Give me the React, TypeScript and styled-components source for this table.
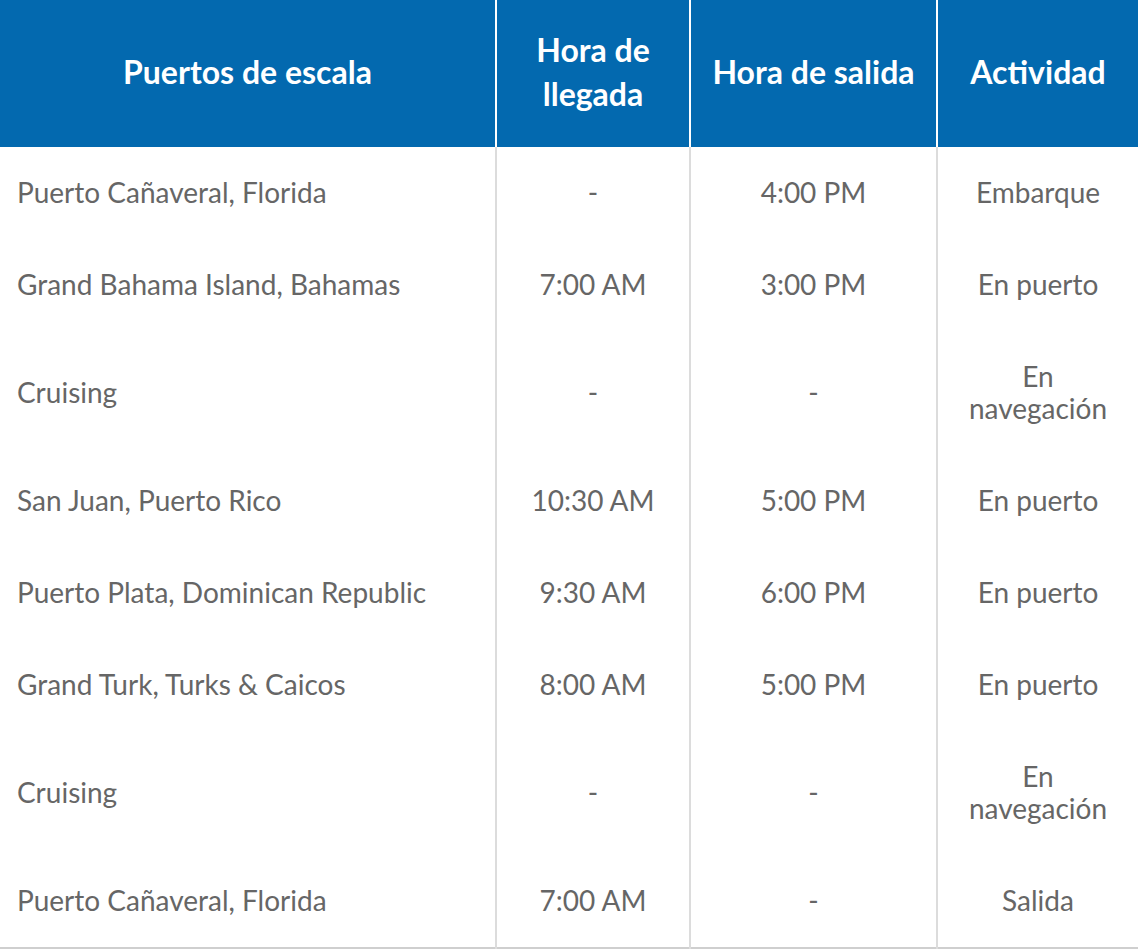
import React from 'react';
import styled, { createGlobalStyle } from 'styled-components';

const GlobalStyle = createGlobalStyle`
  html, body {
    margin: 0;
    padding: 0;
    background: #fff;
  }
  body {
    font-family: Lato, "Open Sans", "Liberation Sans", sans-serif;
  }
`;

// Styled components for the itinerary table
const Table = styled.table`
  width: 1138px;
  border-collapse: collapse;
  table-layout: fixed;
  border-bottom: 2px solid #cfcfcf;
`;

const Col = styled.col<{ $width: number }>`
  width: ${(p) => p.$width}px;
`;

const HeadCell = styled.th`
  box-sizing: border-box;
  background: #0369af;
  color: #fff;
  font-size: 32px;
  font-weight: 700;
  line-height: 44px;
  text-align: center;
  padding: 28px 10px 31px;
  border-left: 2px solid #fff;
  &:first-child {
    border-left: none;
  }
`;

const Cell = styled.td<{ $align?: 'left' | 'center' }>`
  box-sizing: border-box;
  color: #666;
  font-size: 28px;
  line-height: 32px;
  text-align: ${(p) => p.$align || 'center'};
  padding: 29px 17px 31px;
  border-left: 2px solid #dcdcdc;
  &:first-child {
    border-left: none;
  }
`;

type Stop = {
  port: string;
  arrival: string;
  departure: string;
  activity: React.ReactNode;
};

const atSea = (
  <>
    En
    <br />
    navegación
  </>
);

const stops: Stop[] = [
  { port: 'Puerto Cañaveral, Florida', arrival: '-', departure: '4:00 PM', activity: 'Embarque' },
  { port: 'Grand Bahama Island, Bahamas', arrival: '7:00 AM', departure: '3:00 PM', activity: 'En puerto' },
  { port: 'Cruising', arrival: '-', departure: '-', activity: atSea },
  { port: 'San Juan, Puerto Rico', arrival: '10:30 AM', departure: '5:00 PM', activity: 'En puerto' },
  { port: 'Puerto Plata, Dominican Republic', arrival: '9:30 AM', departure: '6:00 PM', activity: 'En puerto' },
  { port: 'Grand Turk, Turks & Caicos', arrival: '8:00 AM', departure: '5:00 PM', activity: 'En puerto' },
  { port: 'Cruising', arrival: '-', departure: '-', activity: atSea },
  { port: 'Puerto Cañaveral, Florida', arrival: '7:00 AM', departure: '-', activity: 'Salida' },
];

const App: React.FC = () => {
  return (
    <>
      <GlobalStyle />
      <Table>
        <colgroup>
          <Col $width={496} />
          <Col $width={194} />
          <Col $width={247} />
          <Col $width={201} />
        </colgroup>
        <thead>
          <tr>
            <HeadCell>Puertos de escala</HeadCell>
            <HeadCell>
              Hora de
              <br />
              llegada
            </HeadCell>
            <HeadCell>Hora de salida</HeadCell>
            <HeadCell>Actividad</HeadCell>
          </tr>
        </thead>
        <tbody>
          {stops.map((stop, i) => (
            <tr key={i}>
              <Cell $align="left">{stop.port}</Cell>
              <Cell>{stop.arrival}</Cell>
              <Cell>{stop.departure}</Cell>
              <Cell>{stop.activity}</Cell>
            </tr>
          ))}
        </tbody>
      </Table>
    </>
  );
};

export default App;
